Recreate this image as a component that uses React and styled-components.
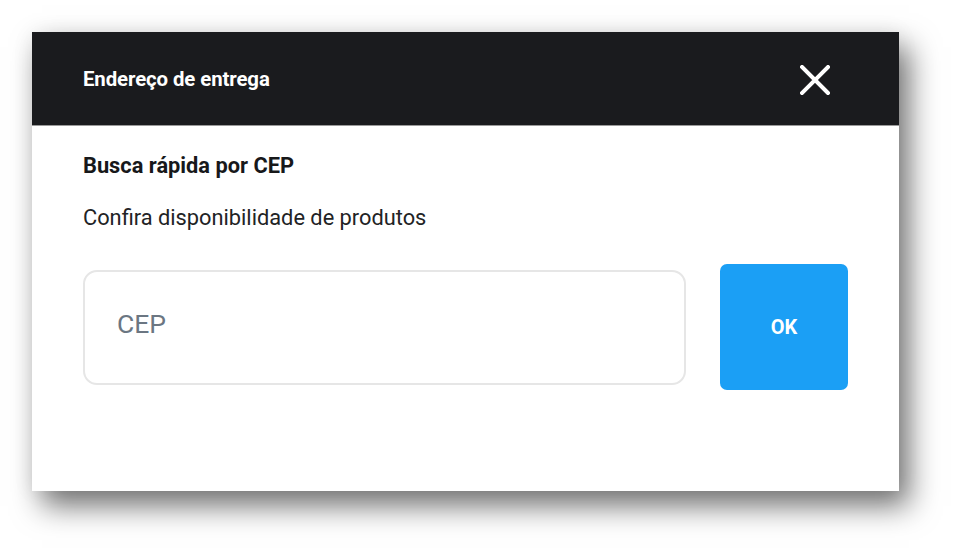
import React from "react";
import styled, { createGlobalStyle } from "styled-components";

const Global = createGlobalStyle`
  html, body { margin: 0; padding: 0; background: #ffffff; }
  body { font-family: Roboto, "Noto Sans", Arial, sans-serif; }
  * { box-sizing: border-box; }
`;

const Page = styled.div`
  width: 964px;
  height: 556px;
  padding: 32px 0 0 32px;
  overflow: hidden;
`;

const Modal = styled.div`
  width: 867px;
  height: 459px;
  background: #ffffff;
  display: flex;
  flex-direction: column;
  box-shadow: 10px 15px 28px rgba(0, 0, 0, 0.55), 0 0 22px rgba(0, 0, 0, 0.06);
`;

const Header = styled.header`
  height: 94px;
  background: #1a1b1e;
  border-bottom: 1px solid #9a9a9a;
  display: flex;
  align-items: center;
  justify-content: space-between;
  padding: 0 68px 0 51px;
`;

const Title = styled.h2`
  margin: 0;
  color: #ffffff;
  font-size: 20.4px;
  font-weight: 700;
  letter-spacing: -0.1px;
  line-height: 24px;
`;

const CloseButton = styled.button`
  background: none;
  border: 0;
  padding: 0;
  width: 32px;
  height: 32px;
  display: flex;
  align-items: center;
  justify-content: center;
  cursor: pointer;
  margin-top: 2px;
`;

const Body = styled.div`
  padding: 28px 51px 0 51px;
  display: flex;
  flex-direction: column;
`;

const Heading = styled.h3`
  margin: 0;
  font-size: 21.8px;
  font-weight: 700;
  color: #17181a;
  line-height: 24px;
`;

const Subtitle = styled.p`
  margin: 27px 0 0 0;
  font-size: 21.8px;
  color: #222325;
  line-height: 26px;
`;

const Row = styled.div`
  margin-top: 33px;
  display: flex;
  align-items: center;
  gap: 34px;
`;

const Input = styled.input`
  width: 603px;
  height: 115px;
  border: 2px solid #e6e6e6;
  border-radius: 14px;
  padding: 0 0 7px 32px;
  font-family: Roboto, "Noto Sans", Arial, sans-serif;
  font-size: 26.5px;
  color: #222;
  outline: none;
  &::placeholder { color: #6b7682; }
`;

const OkButton = styled.button`
  width: 128px;
  height: 126px;
  border: 0;
  border-radius: 7px;
  background: #1b9ff5;
  color: #ffffff;
  font-family: Roboto, "Noto Sans", Arial, sans-serif;
  font-size: 20px;
  font-weight: 700;
  cursor: pointer;
`;

export default function App() {
  return (
    <>
      <Global />
      <Page>
        <Modal>
          <Header>
            <Title>Endereço de entrega</Title>
            <CloseButton aria-label="Fechar">
              <svg width="30" height="30" viewBox="0 0 30 30">
                <path d="M2 2 L28 28 M28 2 L2 28" stroke="#ffffff" strokeWidth="4" strokeLinecap="square" />
              </svg>
            </CloseButton>
          </Header>
          <Body>
            <Heading>Busca rápida por CEP</Heading>
            <Subtitle>Confira disponibilidade de produtos</Subtitle>
            <Row>
              <Input placeholder="CEP" />
              <OkButton>OK</OkButton>
            </Row>
          </Body>
        </Modal>
      </Page>
    </>
  );
}
